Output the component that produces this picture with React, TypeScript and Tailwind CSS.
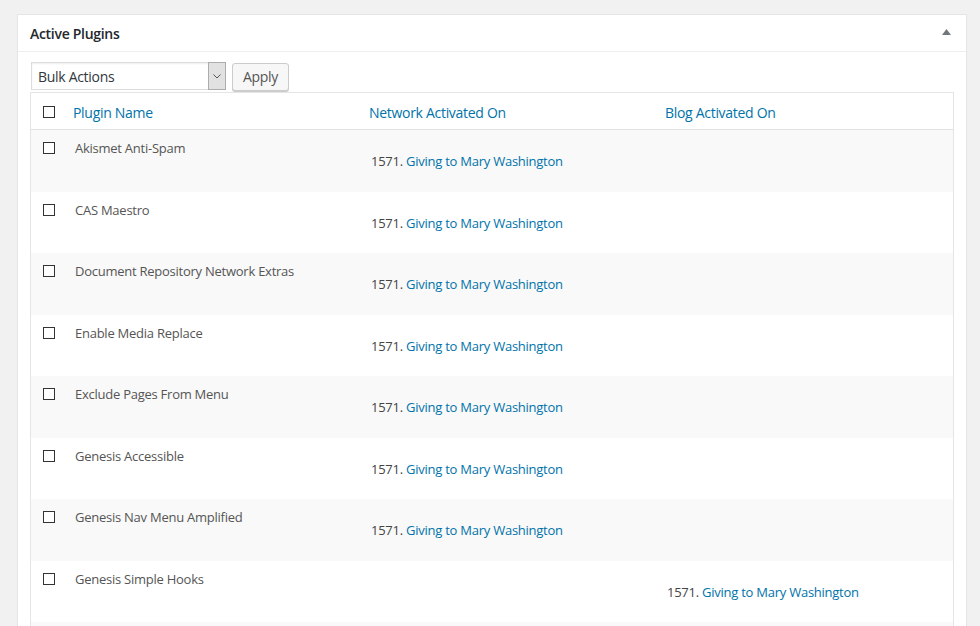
const plugins = [
  { name: 'Akismet Anti-Spam', col: 'network' },
  { name: 'CAS Maestro', col: 'network' },
  { name: 'Document Repository Network Extras', col: 'network' },
  { name: 'Enable Media Replace', col: 'network' },
  { name: 'Exclude Pages From Menu', col: 'network' },
  { name: 'Genesis Accessible', col: 'network' },
  { name: 'Genesis Nav Menu Amplified', col: 'network' },
  { name: 'Genesis Simple Hooks', col: 'blog' },
]

function Checkbox() {
  return <span className="block w-[12px] h-[12px] border border-[#333] bg-white" />
}

function SiteLink() {
  return (
    <span className="text-[#444]">
      1571. <a className="text-[#0073aa]">Giving to Mary Washington</a>
    </span>
  )
}

export default function App() {
  return (
    <div
      className="w-[980px] h-[626px] overflow-hidden bg-[#f1f1f1] pt-[14px] pl-[17px] pr-[13px] text-[13px] tracking-[-0.25px]"
      style={{ fontFamily: '"Open Sans", "Noto Sans", sans-serif' }}
    >
      <div className="bg-white border border-[#e5e5e5] shadow-[0_1px_1px_rgba(0,0,0,0.04)] h-[700px]">
        <div className="h-[37px] border-b border-[#eee] flex items-center justify-between pl-[12px] pr-[15px]">
          <h2 className="text-[14px] font-semibold text-[#23282d] tracking-[-0.3px]">Active Plugins</h2>
          <svg width="9" height="6" viewBox="0 0 9 6" className="mb-[2px]">
            <path d="M4.5 0 L9 6 L0 6 Z" fill="#72777c" />
          </svg>
        </div>
        <div className="px-[12px] pt-[9px]">
          <div className="flex items-center gap-[6px] h-[30px]">
            <div className="ml-px w-[195px] h-[28px] border border-[#ddd] bg-white flex items-stretch shadow-[inset_0_1px_2px_rgba(0,0,0,0.07)]">
              <span className="flex-1 pl-[6px] flex items-center text-[14px] tracking-[-0.3px] text-[#32373c]">Bulk Actions</span>
              <span className="w-[18px] bg-[#e1e1e1] border border-[#acacac] -my-px -mr-px flex items-center justify-center">
                <svg width="8" height="5" viewBox="0 0 8 5">
                  <path d="M0.5 0.5 L4 4 L7.5 0.5" fill="none" stroke="#555" strokeWidth="1" />
                </svg>
              </span>
            </div>
            <button className="h-[28px] px-[10px] bg-[#f7f7f7] border border-[#ccc] rounded-[3px] shadow-[0_1px_0_#ccc] text-[#555] text-[14px] tracking-[-0.3px] mt-[1px]">
              Apply
            </button>
          </div>
          <div className="mt-[1px] border border-[#e5e5e5]">
            <div className="grid grid-cols-[32px_296px_296px_1fr] h-[37px] border-b border-[#e1e1e1] items-center pt-[2px] text-[14px] tracking-[-0.3px]">
              <div className="pl-[12px]"><Checkbox /></div>
              <div className="pl-[10px] text-[#0073aa]">Plugin Name</div>
              <div className="pl-[10px] text-[#0073aa]">Network Activated On</div>
              <div className="pl-[10px] text-[#0073aa]">Blog Activated On</div>
            </div>
            {plugins.map((p, i) => (
              <div
                key={p.name}
                className={`grid grid-cols-[32px_296px_296px_1fr] h-[61.5px] ${i % 2 === 0 ? 'bg-[#f9f9f9]' : 'bg-white'}`}
              >
                <div className="pl-[12px] pt-[12px]"><Checkbox /></div>
                <div className="pl-[12px] pt-[9px] text-[#555]">{p.name}</div>
                <div className="pl-[12px] pt-[22px]">{p.col === 'network' && <SiteLink />}</div>
                <div className="pl-[12px] pt-[22px]">{p.col === 'blog' && <SiteLink />}</div>
              </div>
            ))}
            <div className="h-[61.5px] bg-[#f9f9f9]" />
          </div>
        </div>
      </div>
    </div>
  )
}
